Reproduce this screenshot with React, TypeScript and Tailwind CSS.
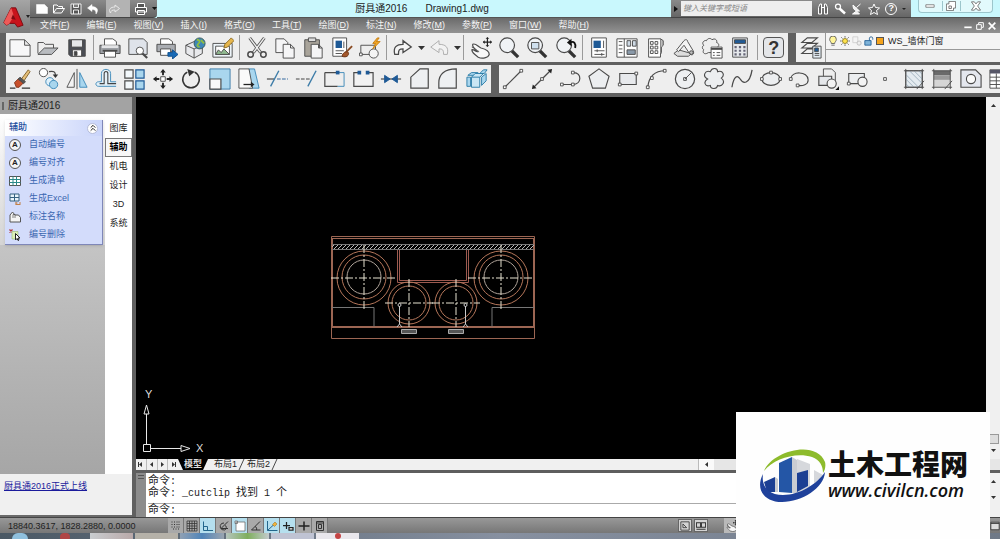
import React, { useState } from 'react';
import clsx from 'clsx';

type IconMap = Record<string, React.ReactNode>;

const BLUE = '#a9d6ee';
const NAVY = '#1f5a96';

// Toolbar glyphs, all drawn on a 24x24 grid
const icons: IconMap = {
  new: <path d="M1 3h16l6 6v12H1zM17 3v6h6" fill="#f7f7f8" />,
  open: (
    <>
      <path d="M1 18V6h6l2 2h9v4" fill="#eee" />
      <path d="M1 19l7-7h15l-7 7z" fill="#b9bcc0" />
    </>
  ),
  save: (
    <>
      <path d="M3 3h18v18H5l-2-2z" fill="#4a4d55" />
      <path d="M6 3h12v8H6z" fill="#e5e7ea" />
      <path d="M7 14h10v7H7z" fill="#fff" />
      <path d="M9 16h3v4H9z" fill="#444" />
    </>
  ),
  print: (
    <>
      <path d="M6 9V2h9l4 3v4" fill="#fff" />
      <path d="M1 9h22v9H1z" fill="#9fa2a7" />
      <path d="M3 9h18v3H3z" fill="#e3e4e6" stroke="none" />
      <path d="M6 15h12v7H6z" fill="#fff" />
      <path d="M4 15h16" strokeWidth="2" />
    </>
  ),
  preview: (
    <>
      <path d="M2 2h16l4 4v13H2z" fill="#dfe3ea" />
      <circle cx="14" cy="15" r="4" fill="#fff" />
      <path d="M17 18l5 5" strokeWidth="2.4" />
    </>
  ),
  publish: (
    <>
      <path d="M5 8V2h9l4 3v3" fill="#fff" />
      <path d="M1 8h20v8H1z" fill="#aaadb2" />
      <path d="M5 13h11v7H5z" fill="#fff" />
      <path d="M13 17h5v-3l6 5-6 5v-3h-5z" fill="#1769b5" stroke="#10508d" />
    </>
  ),
  globe: (
    <>
      <path d="M2 9l9-4 9 4v9l-9 5-9-5z" fill="#e8e9ec" />
      <path d="M2 9l9 4v10M11 13l9-4" />
      <circle cx="17" cy="7" r="6" fill="#3d86b8" stroke="#355" />
      <path d="M14 3c3 0 4 2 2 4s-2 3 1 4M19 3c0 2 2 3 3 4" stroke="#8fbf3f" strokeWidth="2" />
    </>
  ),
  picture: (
    <>
      <path d="M1 7h21v15H1z" fill="#eef5fa" />
      <path d="M4 10h15v9H4z" fill="#fff" />
      <path d="M4 19l3-5 3 3 3-4 6 6z" fill="#8fb98f" />
      <path d="M13 12l1-4 7-7 3 3-7 7z" fill="#e6b64d" stroke="#8a6a22" />
    </>
  ),
  cut: (
    <>
      <path d="M4 1l12 16M20 1L8 17" stroke="#555" strokeWidth="3.4" />
      <path d="M4 1l12 16M20 1L8 17" stroke="#eee" strokeWidth="1.6" />
      <circle cx="5" cy="19" r="3" strokeWidth="1.6" />
      <circle cx="19" cy="19" r="3" strokeWidth="1.6" />
    </>
  ),
  copy: (
    <>
      <path d="M2 2h9l4 4v11H2z" fill="#f5f5f6" />
      <path d="M10 8h8l4 4v11H10zM18 8v4h4" fill="#f5f5f6" />
    </>
  ),
  paste: (
    <>
      <path d="M3 3h16v18H3z" fill="#a9a49a" />
      <path d="M7 1h8v4H7z" fill="#ddd" />
      <path d="M10 8h8l4 4v11H10zM18 8v4h4" fill="#f5f5f6" />
    </>
  ),
  match: (
    <>
      <path d="M2 1h15v20H2z" fill="#fff" />
      <path d="M5 4h7v8H5z" fill={NAVY} stroke="none" />
      <path d="M14 5v7M5 15h9M5 18h7" />
      <path d="M16 17l7-7" stroke="#8a4a22" strokeWidth="2" />
      <path d="M12 21c1-4 4-6 7-4 1 3-2 6-7 4z" fill="#a3572b" stroke="#6a3416" />
    </>
  ),
  block: (
    <>
      <path d="M2 9h16v10H2z" fill="#eee" />
      <circle cx="16" cy="18" r="5" fill="#f4f4f4" />
      <path d="M.5 17.500h3v3h-3z" fill="#fff" />
      <path d="M20 1l-5 6h3l-3 6 8-8h-4l3-4z" fill="#f4a623" stroke="#c47d10" />
    </>
  ),
  undo: <path d="M3 19c-2-8 2-11 9-11V4l9 7-9 6v-4c-4 0-5 1-5 6z" fill="#f5f5f5" strokeWidth="1.4" />,
  redo: <path d="M21 19c2-8-2-11-9-11V4l-9 7 9 6v-4c4 0 5 1 5 6z" fill="#f2f2f2" stroke="#aaa" />,
  pan: (
    <>
      <path d="M3 8c3-2 6 3 9 4 4 1 9 3 9 7-1 4-8 5-12 3-3-2-7-6-7-8 2-1 4 2 6 2-2-2-6-5-5-8z" fill="#f8f8f8" strokeWidth="1.3" />
      <path d="M2 11c3 0 5 4 8 5" />
      <path d="M19 1v9M14.500 5.500h9" stroke="#222" strokeWidth="1.3" />
      <path d="M17 2l2-2 2 2zM17 9l2 2 2-2zM16 3.500l-2 2 2 2zM22 3.500l2 2-2 2z" fill="#222" stroke="none" />
    </>
  ),
  zoom: (
    <>
      <path d="M15 15l7 7" stroke="#333" strokeWidth="3.500" />
      <circle cx="10" cy="9" r="8" fill="#f0f3f6" strokeWidth="1.3" />
    </>
  ),
  zoomWindow: (
    <>
      <path d="M15 15l7 7" stroke="#333" strokeWidth="3.500" />
      <circle cx="10" cy="9" r="8" fill="#f0f3f6" strokeWidth="1.3" />
      <path d="M6 6h8v7H6z" fill="#cfe0ee" />
    </>
  ),
  zoomPrev: (
    <>
      <path d="M15 15l7 7" stroke="#333" strokeWidth="3.500" />
      <circle cx="10" cy="9" r="8" fill="#f0f3f6" strokeWidth="1.3" />
      <path d="M16 6c5-2 7 1 6 6" stroke="#111" strokeWidth="2" />
      <path d="M18 2v8l-5-4z" fill="#111" stroke="none" />
    </>
  ),
  props: (
    <>
      <path d="M4 1h16v21H4z" fill="#fff" />
      <path d="M6 4h8v8H6z" fill={NAVY} stroke="none" />
      <path d="M17 4v8M7 15h11M7 19h11M10 13.500v3M15 17.500v3" />
    </>
  ),
  designCenter: (
    <>
      <path d="M1 2h22v20H1z" fill="#fff" />
      <path d="M9 2v20M3 5h4M3 9h4M3 13h4M3 17h4" />
      <path d="M12 4h4v6h-4zM18 4h4v6h-4z" fill="#cfdbe6" />
      <path d="M12 14h9v5h-9z" fill="#8a9aaa" />
    </>
  ),
  palettes: (
    <>
      <path d="M5 2h13v20H5z" fill="#fff" />
      <path d="M18 2l3 2v5l-2 2v6l-1 2" fill="#bbb" />
      <path d="M7 5h3v3H7zM12 5h3v3h-3zM7 10h3v3H7zM12 10h3v3h-3zM7 15h3v3H7zM12 15h3v3h-3z" />
    </>
  ),
  sheets: (
    <>
      <path d="M1 18l5-4 14 4-3 3H5z" fill="#ddd" />
      <path d="M4 14L12 4c2-2 4-1 4 1l6 10c2 4-2 6-4 3L12 9l-6 7z" fill="#f4f4f4" />
      <circle cx="20" cy="17" r="2" fill="#bbb" />
    </>
  ),
  markup: (
    <>
      <path d="M3 9c-3-3 1-6 3-5 1-3 5-3 6-1 3-2 6 0 5 3 3 1 3 4 1 5v6H8c-4 3-7 0-5-3-2-1-2-4 0-5z" fill="#eee" />
      <path d="M11 11h12v12H11z" fill="#fff" />
      <path d="M11 13h12" strokeWidth="2" />
      <path d="M13 17h2M17 17h4M13 20h2M17 20h4" />
    </>
  ),
  calc: (
    <>
      <path d="M4 1h16v21H4z" fill="#e6e9ec" />
      <path d="M6 3h12v4H6z" fill={NAVY} />
      <path d="M6 11h12M6 15h12M6 19h12" stroke="#667" strokeWidth="2.400" strokeDasharray="2.400 2.400" />
    </>
  ),
  layers: (
    <>
      <path d="M2 18l6-5h11l-6 5zM2 12l6-5h11l-6 5zM2 6l6-5h11l-6 5z" fill="#f2f2f2" strokeWidth="1.2" />
      <path d="M14 10h9v13h-9z" fill="#e4edf4" />
      <path d="M16 12h4v4h-4z" fill={NAVY} />
      <path d="M16 18h5M16 20h5" />
    </>
  ),
  erase: (
    <>
      <path d="M1 22h6M14 22h9" stroke="#333" strokeWidth="1.500" />
      <path d="M12 14L21 2l2 2-8 12z" fill="#e6c07a" stroke="#80602a" />
      <path d="M6 16l4-4 6 4-5 5H8z" fill="#c9502c" stroke="#7c2f16" />
      <path d="M10 12l2-2 6 5-2 2z" fill="#555" />
    </>
  ),
  duplicate: (
    <>
      <circle cx="6" cy="5" r="4.500" fill="#fff" />
      <path d="M12 4c5-1 7 0 7 4" strokeWidth="1.4" />
      <path d="M16 7h6l-3 4z" fill="#333" stroke="none" />
      <circle cx="13" cy="15" r="4.500" fill="#dff0fa" stroke="#3c88b8" />
      <circle cx="17" cy="18" r="4.500" fill={BLUE} stroke="#3c88b8" />
    </>
  ),
  mirror: (
    <>
      <path d="M9 5v16H1z" fill="#f4f4f4" />
      <path d="M12 1v22" />
      <path d="M15 5v16h8z" fill={BLUE} stroke="#3c88b8" />
    </>
  ),
  offset: (
    <>
      <path d="M23 20H4c-4 0-4-5 0-5h3V6c0-6 10-6 10 0v9h6" fill="#e3f1f9" stroke="#3c88b8" />
      <path d="M23 17h-9V6c0-3-4-3-4 0v11H5" stroke="#444" strokeWidth="1.2" />
    </>
  ),
  array: (
    <>
      <path d="M2 2h9v9H2zM2 14h9v9H2z" fill="#f3f8fb" strokeWidth="1.300" />
      <path d="M14 2h9v9h-9zM14 14h9v9h-9z" fill={BLUE} stroke={NAVY} strokeWidth="1.300" />
    </>
  ),
  move: (
    <>
      <path d="M9.500 9.500h5v5h-5z" fill="#fff" />
      <path d="M12 4v4M12 16v4M4 12h4M16 12h4" stroke="#222" strokeWidth="2" />
      <path d="M9 5l3-4 3 4zM9 19l3 4 3-4zM5 9l-4 3 4 3zM19 9l4 3-4 3z" fill="#222" stroke="none" />
    </>
  ),
  rotate: (
    <>
      <path d="M8 4.500a9 9 0 1 0 8 0" stroke="#333" strokeWidth="1.600" />
      <path d="M8 1l8 3-6 5z" fill="#333" stroke="none" />
    </>
  ),
  scale: (
    <>
      <path d="M1 1h22v22H1z" fill={BLUE} stroke="#3c7ca8" />
      <path d="M1 12h12v11H1z" fill="#fafafa" strokeWidth="1.300" />
    </>
  ),
  stretch: (
    <>
      <path d="M12 1h6l5 21H12z" fill={BLUE} stroke="#3c88b8" />
      <path d="M1 1h11l4 21H1z" fill="#fafafa" />
      <path d="M6 18h9" stroke="#222" strokeWidth="1.400" />
      <path d="M14 15l4 3-4 3z" fill="#222" stroke="none" />
    </>
  ),
  trim: (
    <>
      <path d="M1 12h8" strokeWidth="1.300" />
      <path d="M12 12h12" stroke={NAVY} strokeDasharray="4 1.500" />
      <path d="M5 20L14 3" stroke="#3c7ca8" strokeWidth="1.500" />
    </>
  ),
  extend: (
    <>
      <path d="M1 12h15" stroke="#333" strokeDasharray="4 1.500" />
      <path d="M14 20L23 3" stroke="#3c7ca8" strokeWidth="1.500" />
    </>
  ),
  breakPoint: (
    <>
      <path d="M2 5h14M16 20H2V5" strokeWidth="1.300" />
      <path d="M16 5h7M23 5v15H16" stroke="#3c88b8" />
      <path d="M14 3h4v4h-4z" fill={NAVY} stroke="none" />
    </>
  ),
  break: (
    <>
      <path d="M7 5H2v15h21V5h-5" fill="#f2f2f2" strokeWidth="1.300" />
      <path d="M6 3h4v4H6zM15 3h4v4h-4z" fill={NAVY} stroke="none" />
    </>
  ),
  join: (
    <>
      <path d="M1 12h22" strokeWidth="1.300" />
      <path d="M5 8l6 4-6 4zM19 8l-6 4 6 4z" fill={NAVY} stroke={NAVY} />
    </>
  ),
  chamfer: <path d="M2 22V10l10-9h9v21z" fill="#eef0f2" strokeWidth="1.300" />,
  fillet: <path d="M2 22V16C2 7 8 1 21 1v21z" fill="#eef0f2" strokeWidth="1.300" />,
  explode: (
    <>
      <path d="M2 8l4-3h7l-3 3zM15 6l4-4h4l-3 4zM1 10h4v10H1zM17 10l5-4v8l-5 5z" fill={BLUE} stroke="#287ba6" />
      <path d="M6 10h9v11H6zM6 10l4-4h9l-4 4" fill="#c9e6f4" stroke="#287ba6" />
    </>
  ),
  line: (
    <>
      <path d="M3 21L21 3" strokeWidth="1.300" />
      <path d="M1.500 19.500h3v3h-3zM19.500 1.500h3v3h-3z" fill="#fff" />
    </>
  ),
  xline: (
    <>
      <path d="M3 21L21 3" strokeWidth="1.300" />
      <path d="M1 23l1-5 4 4zM23 1l-5 1 4 4z" fill="#222" stroke="none" />
      <path d="M10.500 10.500h3v3h-3z" fill="#fff" />
    </>
  ),
  pline: (
    <>
      <path d="M2 18h12c10 0 10-13 1-13" strokeWidth="1.300" />
      <path d="M.5 16.500h3v3h-3zM12.500 16.500h3v3h-3zM12.500 3.500h3v3h-3z" fill="#fff" />
    </>
  ),
  polygon: <path d="M12 1l11 8-4 13H5L1 9z" fill="#eceef0" strokeWidth="1.200" />,
  rect: (
    <>
      <path d="M3 6h18v12H3z" fill="#e7e9ec" strokeWidth="1.200" />
      <path d="M1.500 16.500h3v3h-3zM19.500 4.500h3v3h-3z" fill="#fff" />
    </>
  ),
  arc: (
    <>
      <path d="M3 21C4 11 9 3 22 3" strokeWidth="1.300" />
      <path d="M1.500 19.500h3v3h-3zM6 9.500h3v3H6zM20 1.500h3v3h-3z" fill="#fff" />
    </>
  ),
  circle: (
    <>
      <circle cx="12" cy="12" r="10.500" fill="#eef0f2" strokeWidth="1.300" />
      <path d="M12 12l7-7M10.500 10.500h3v3h-3z" />
    </>
  ),
  cloud: (
    <path
      d="M5 12c-6-3-3-10 3-8 2-5 8-4 8 0 6-2 8 4 4 7 5 4 1 10-4 8-1 5-8 4-8 0-6 2-8-4-3-7z"
      fill="#eceef0"
      strokeWidth="1.200"
    />
  ),
  spline: <path d="M1 21C3 9 7 7 10 12s10 7 13-10" strokeWidth="1.400" />,
  ellipse: (
    <>
      <ellipse cx="12" cy="12" rx="10" ry="7" fill="#eceef0" strokeWidth="1.200" />
      <path d="M.5 10.500h3v3h-3zM20.500 10.500h3v3h-3zM10.500 3.500h3v3h-3z" fill="#fff" />
    </>
  ),
  ellipseArc: (
    <>
      <path d="M3 12c0-9 19-9 19 1 0 5-6 7-11 6" strokeWidth="1.200" />
      <path d="M1.500 10.500h3v3h-3zM9 17.500h3v3H9z" fill="#fff" />
    </>
  ),
  insertBlock: (
    <>
      <path d="M7 1h9l4 4v11H7z" fill="#eee" />
      <path d="M2 9h14v10H2z" fill="#e5e7ea" strokeWidth="1.200" />
      <circle cx="16" cy="17" r="5" fill="#f3f3f3" strokeWidth="1.200" />
      <path d="M24 20v4h-4z" fill="#111" stroke="none" />
    </>
  ),
  makeBlock: (
    <>
      <path d="M3 6h17v11H3z" fill="#eceef0" strokeWidth="1.200" />
      <circle cx="18" cy="15" r="5" fill="#f3f3f3" strokeWidth="1.200" />
      <path d="M1.500 15.500h3v3h-3z" fill="#fff" />
    </>
  ),
  point: <path d="M10.500 10.500h3v3h-3z" fill="#fff" />,
  hatch: (
    <>
      <path d="M3 3h18v18H3z" fill="#e4ebf0" />
      <path d="M3 7l14 14M3 12l9 9M3 17l4 4M7 3l14 14M12 3l9 9M17 3l4 4" stroke="#9fb0bd" />
      <path d="M1 3h22M1 21h22M3 1v22M21 1v22M15 23l8-9" />
    </>
  ),
  gradient: (
    <>
      <path d="M3 3h18v5H3z" fill="#6a6a6a" stroke="none" />
      <path d="M3 8h18v5H3z" fill="#9a9a9a" stroke="none" />
      <path d="M3 13h18v8H3z" fill="#d6d6d6" stroke="none" />
      <path d="M1 3h22M1 21h22M3 1v22M21 1v22M15 23l8-9" />
    </>
  ),
  region: (
    <>
      <path d="M1 2h16l6 6v13H1z" fill="#e4e7ee" strokeWidth="1.200" />
      <circle cx="12" cy="12" r="5" fill="#fafafa" strokeWidth="1.200" />
    </>
  ),
  table: (
    <>
      <path d="M1 2h22v20H1z" fill="#fff" />
      <path d="M1 4h22" stroke="#556" strokeWidth="4" />
      <path d="M1 10h22M1 14h22M1 18h22M8 6v16M16 6v16" />
    </>
  ),
};

const standardTools = [
  'new', 'open', 'save', '|', 'print', 'preview', 'publish', 'globe', 'picture', '|',
  'cut', 'copy', 'paste', 'match', 'block', '|', 'undo', 'v', 'redo', 'v', '|',
  'pan', 'zoom', 'zoomWindow', 'zoomPrev', '|',
  'props', 'designCenter', 'palettes', 'sheets', 'markup', 'calc', '|', 'help',
];

const modifyTools = [
  'erase', 'duplicate', 'mirror', 'offset', 'array', 'move', 'rotate', 'scale', 'stretch',
  'trim', 'extend', 'breakPoint', 'break', 'join', 'chamfer', 'fillet', 'explode',
];

const drawTools = [
  'line', 'xline', 'pline', 'polygon', 'rect', 'arc', 'circle', 'cloud', 'spline', 'ellipse',
  'ellipseArc', 'insertBlock', 'makeBlock', 'point', 'hatch', 'gradient', 'region', 'table',
];

const menus = [
  '文件(F)', '编辑(E)', '视图(V)', '插入(I)', '格式(O)', '工具(T)',
  '绘图(D)', '标注(N)', '修改(M)', '参数(P)', '窗口(W)', '帮助(H)',
];

const paletteTabs = ['图库', '辅助', '机电', '设计', '3D', '系统'];

const Svg: React.FC<{ size?: string; children: React.ReactNode; box?: string }> = ({
  size = 'size-6',
  box = '0 0 24 24',
  children,
}) => (
  <svg viewBox={box} className={clsx('shrink-0', size)} fill="none" stroke="#4a4a4a" strokeWidth="1" aria-hidden="true">
    {children}
  </svg>
);

const Tool: React.FC<{ name: string }> = ({ name }) => {
  if (name === '|') {
    return (
      <span className="flex min-w-0 flex-[10] justify-center py-0.5">
        <span className="w-px bg-[#9a9a9a]" />
      </span>
    );
  }
  if (name === 'v') {
    return (
      <button aria-label="列表" className="flex min-w-0 flex-[16] items-center justify-center">
        <Svg size="h-1 w-[7px]" box="0 0 7 4">
          <path d="M0 0h7L3.500 4z" fill="#333" stroke="none" />
        </Svg>
      </button>
    );
  }
  if (name === 'help') {
    return (
      <button aria-label={name} className="flex min-w-0 flex-[57] items-center justify-center">
        <span className="flex size-[21px] items-center justify-center rounded-sm border border-[#555] bg-[#e4e6e9] text-[18px] leading-none font-bold text-[#333]">
          ?
        </span>
      </button>
    );
  }
  return (
    <button aria-label={name} className="flex min-w-0 flex-[57] items-center justify-center">
      <Svg size="size-[22px]">{icons[name]}</Svg>
    </button>
  );
};

const TitleBar: React.FC = () => (
  <div className="flex h-[18px] bg-[#c9f8fd]">
    <div className="flex w-[127px] items-center gap-[5px] rounded-br-sm border-b border-[#444] bg-linear-to-b from-[#8a8a8a] to-[#666] pl-1.5">
      <button aria-label="新建"><Svg size="size-3"><path d="M1 3h16l6 6v12H1z" fill="#fff" stroke="#fff" /></Svg></button>
      <button aria-label="打开"><Svg size="size-3"><path d="M1 20V4h7l3 3h8v3M1 20l6-9h16l-6 9z" fill="#777" stroke="#fff" strokeWidth="2" /></Svg></button>
      <button aria-label="保存"><Svg size="size-3"><path d="M2 2h20v20H2zM7 2v7h10V2M7 22v-8h10v8" fill="#555" stroke="#eee" strokeWidth="2" /></Svg></button>
      <button aria-label="放弃"><Svg size="size-3"><path d="M10 3L1 10l9 7v-4c6 0 8 2 8 9 6-8 3-14-8-15z" fill="#fff" stroke="#fff" /></Svg></button>
      <button aria-label="重做" className="ml-0.5 flex h-full w-6 items-center bg-[#b3b3b3] pl-0.5"><Svg size="size-3"><path d="M14 4l9 7-9 7v-4c-6 0-8 1-9 6-5-7 0-12 9-12z" stroke="#e8e8e8" strokeWidth="2" /></Svg></button>
      <button aria-label="打印"><Svg size="size-3"><path d="M5 9V1h14v8M1 9h22v9H1zM5 15h14v8H5z" fill="#555" stroke="#fff" strokeWidth="2" /></Svg></button>
      <Svg size="h-[3px] w-[5px]" box="0 0 5 3"><path d="M0 0h5L2.500 3z" fill="#111" stroke="none" /></Svg>
    </div>
    <h1 className="flex min-w-0 flex-1 items-center justify-center gap-[18px] border-b border-[#555] pl-4 text-[10px] whitespace-nowrap text-[#222]">
      <span>厨具通2016</span>
      <span>Drawing1.dwg</span>
    </h1>
    <form className="flex w-[240px] items-center border-b border-[#444] bg-linear-to-b from-[#8a8a8a] to-[#666]">
      <button type="button" aria-label="展开" className="flex w-2.5 justify-center">
        <Svg size="h-1.5 w-1" box="0 0 4 6"><path d="M0 0l4 3-4 3z" fill="#111" stroke="none" /></Svg>
      </button>
      <input
        aria-label="搜索"
        placeholder="键入关键字或短语"
        className="h-[15px] w-[131px] bg-[#eee] px-0.5 text-[8px] italic outline-none placeholder:text-[#888]"
      />
      <div className="flex flex-1 items-center justify-around px-0.5">
        <button type="button" aria-label="查找"><Svg size="size-3"><path d="M3 22V9l3-7h3v20zM21 22V9l-3-7h-3v20zM9 9h6" fill="#666" stroke="#fff" strokeWidth="2" /></Svg></button>
        <button type="button" aria-label="订阅"><Svg size="size-3"><circle cx="8" cy="7" r="5" fill="#777" stroke="#fff" strokeWidth="2.500" /><path d="M11 11l11 10" stroke="#fff" strokeWidth="5" /></Svg></button>
        <button type="button" aria-label="通讯"><Svg size="size-3"><path d="M4 4c0 9 5 13 13 12zM11 9l8-7M3 22h14l-6-6z" fill="#eee" stroke="#fff" strokeWidth="2" /></Svg></button>
        <button type="button" aria-label="收藏"><Svg size="size-3"><path d="M12 2l3 7 8 1-6 5 2 8-7-4-7 4 2-8-6-5 8-1z" fill="#666" stroke="#fff" strokeWidth="2" /></Svg></button>
        <button type="button" aria-label="帮助" className="flex size-3 items-center justify-center rounded-full border border-white text-[9px] leading-none font-bold text-white">?</button>
        <Svg size="h-0.5 w-1" box="0 0 4 2"><path d="M0 0h4L2 2z" fill="#222" stroke="none" /></Svg>
      </div>
    </form>
    <div className="flex w-[89px] justify-center border-b border-[#555]">
      <div className="flex h-[13px] w-[75px] items-center rounded-b-sm border border-t-0 border-[#9cc6cc] bg-[#e2fafc]">
        <button aria-label="最小化" className="flex flex-[26] justify-center"><Svg size="size-2.5"><path d="M2 9h20v6H2z" fill="#fff" stroke="#777" strokeWidth="2" /></Svg></button>
        <button aria-label="还原" className="flex flex-[20] justify-center border-x border-[#9cc6cc]"><Svg size="size-2.5"><path d="M7 1h16v16h-5v6H1V7h6zM7 12h6v6H7z" fill="#fff" stroke="#666" strokeWidth="2" /></Svg></button>
        <button aria-label="关闭" className="flex flex-[36] justify-center"><Svg size="size-2.5"><path d="M1 2h7l4 5 4-5h7l-7 10 7 10h-7l-4-5-4 5H1l7-10z" fill="#fff" stroke="#666" strokeWidth="2" /></Svg></button>
      </div>
    </div>
  </div>
);

const MenuBar: React.FC = () => (
  <nav className="flex h-[15px] items-center bg-linear-to-b from-[#6b6b6b] to-[#939393] pr-1 pl-2.5 text-[#f4f4f4]">
    <ul className="flex flex-1 gap-[17px] text-[9px] leading-[15px] whitespace-nowrap">
      {menus.map((m) => (
        <li key={m}>
          <button>
            {m.slice(0, 3)}
            <span className="underline">{m[3]}</span>)
          </button>
        </li>
      ))}
    </ul>
    <div className="flex gap-1">
      <button aria-label="最小化"><Svg size="size-2"><path d="M1 16h22" stroke="#fff" strokeWidth="5" /></Svg></button>
      <button aria-label="还原"><Svg size="size-2"><path d="M8 6V2h14v14h-4M2 8h14v14H2z" stroke="#fff" strokeWidth="3" /></Svg></button>
      <button aria-label="关闭"><Svg size="size-2"><path d="M2 2l20 20M22 2L2 22" stroke="#fff" strokeWidth="5" /></Svg></button>
    </div>
  </nav>
);

const LayerBar: React.FC = () => (
  <div className="flex min-w-0 flex-[204] bg-[#f0f0f0]">
    <button aria-label="图层" className="flex w-[29px] items-center justify-center"><Svg size="size-[22px]">{icons.layers}</Svg></button>
    <div className="flex-1 border-l border-[#999]">
      <div className="flex h-[17px] items-center gap-0.5 border-b border-[#999] bg-[#f4f4f4] pl-0.5">
        <Svg size="size-2.5"><path d="M8 22h8M8 18c0-4-4-5-4-10a8 8 0 0 1 16 0c0 5-4 6-4 10z" fill="#fff59a" stroke="#555" strokeWidth="2" /></Svg>
        <Svg size="size-2.5"><circle cx="12" cy="12" r="6" fill="#ffe34d" stroke="#86731d" strokeWidth="2" /><path d="M12 0v4M12 20v4M0 12h4M20 12h4M3 3l3 3M18 18l3 3M21 3l-3 3M6 18l-3 3" stroke="#555" strokeWidth="2" /></Svg>
        <Svg size="size-2.5"><path d="M2 2h12v14H2z" stroke="#ccc" strokeWidth="2" /><circle cx="17" cy="17" r="5" fill="#eee" stroke="#bbb" strokeWidth="2" /></Svg>
        <Svg size="size-2.5"><path d="M2 11h15v11H2z" fill="#7fb3d9" stroke="#1d5d94" strokeWidth="2" /><path d="M13 11V5c0-4 8-4 8 0v4" stroke="#1d5d94" strokeWidth="2" /></Svg>
        <span className="size-2 shrink-0 border border-[#555] bg-[#f5a31b]" />
        <select aria-label="图层列表" className="w-full appearance-none pl-0.5 text-[9px] leading-[14px] text-[#222] outline-none">
          <option>WS_墙体门窗</option>
        </select>
      </div>
    </div>
  </div>
);

const paletteItems: { label: string; icon: React.ReactNode }[] = [
  { label: '自动编号', icon: <span className="flex size-3 items-center justify-center rounded-full border border-[#555] bg-[#f4f4f4] text-[8px] leading-none font-bold text-[#222]">A</span> },
  { label: '编号对齐', icon: <span className="flex size-3 items-center justify-center rounded-full border border-[#555] bg-[#f4f4f4] text-[8px] leading-none font-bold text-[#222]">A</span> },
  {
    label: '生成清单',
    icon: <Svg size="size-3"><path d="M1 3h22v18H1z" fill="#fff" stroke="#555" strokeWidth="2" /><path d="M8 3v18M15 3v18M1 9h22M1 15h22" stroke="#2a8a8a" strokeWidth="2" /></Svg>,
  },
  {
    label: '生成Excel',
    icon: <Svg size="size-3"><path d="M2 2h18v14H2zM11 2v14M2 9h18" fill="#e8f4fa" stroke="#35617f" strokeWidth="2" /><path d="M14 18v5M13 20h4M20 20h4M13 23h10" stroke="#c08048" strokeWidth="2" /></Svg>,
  },
  {
    label: '标注名称',
    icon: <Svg size="size-3"><path d="M2 8l5-6 5 6h7l4 5v9H2z" fill="#f5f5f5" stroke="#555" strokeWidth="2" /><path d="M8 14V7h4v7" stroke="#555" strokeWidth="1.500" /></Svg>,
  },
  {
    label: '编号删除',
    icon: <Svg size="size-3"><path d="M1 1l6 6M7 1L1 7" stroke="#b03030" strokeWidth="2.500" /><path d="M6 5h12v15H6z" fill="#dcefb8" stroke="#8ab05a" /><path d="M13 9v13l3-3 2 4 2-1-2-4h4z" fill="#fff" stroke="#222" strokeWidth="2" /></Svg>,
  },
];

const Palette: React.FC = () => {
  const [active, setActive] = useState('辅助');
  return (
    <aside className="flex w-[132px] shrink-0 flex-col">
      <div className="flex h-[17px] items-center gap-1 bg-[#a3a3a3] pl-0.5 text-[10px] text-[#222]">
        <span className="h-2 w-0.5 bg-[#666]" />
        厨具通2016
      </div>
      <div className="flex flex-1 bg-white">
        <div className="flex-1 bg-linear-to-b from-[#d6d6d6] to-[#a6a6a6]">
          <div className="bg-linear-to-b from-white to-[#d4d4d4] pt-1.5 pr-0.5 pl-[5px]">
            <section className="border-r border-b border-[#7f87b8] bg-[#d3dcfb] shadow-sm">
              <h2 className="flex h-4 items-center justify-between bg-linear-to-r from-white to-[#c9d4fa] px-1 text-[9px] font-medium text-[#1f4f9e]">
                辅助
                <button aria-label="折叠" className="flex size-[11px] items-center justify-center rounded-full border border-[#b5bcd8] bg-white">
                  <Svg size="size-2"><path d="M5 11l7-7 7 7M5 20l7-7 7 7" stroke="#222" strokeWidth="3" /></Svg>
                </button>
              </h2>
              <ul>
                {paletteItems.map((item) => (
                  <li key={item.label}>
                    <button className="flex h-[18px] w-full items-center gap-2 pl-1 text-[9px] text-[#3a66b0]">
                      {item.icon}
                      {item.label}
                    </button>
                  </li>
                ))}
              </ul>
            </section>
          </div>
        </div>
        <div className="flex w-[27px] flex-col pt-[5px] text-[9px] text-[#222]" role="tablist">
          {paletteTabs.map((t) => (
            <button
              key={t}
              role="tab"
              aria-selected={t === active}
              onClick={() => setActive(t)}
              className={clsx('h-[19px]', t === active && 'border border-[#777] bg-[#f7f7f7] font-bold text-black')}
            >
              {t}
            </button>
          ))}
        </div>
      </div>
      <div className="h-[41px] bg-[#f0f0f0] pt-1 pl-1 text-[9px] leading-4">
        <a href="#news" className="text-[#1b1b9c] underline">厨具通2016正式上线</a>
      </div>
      <div className="h-0.5 bg-[#6a6a6a]" />
    </aside>
  );
};

const Burner: React.FC<{ cx: number; cy: number; rings: number[]; arm: number }> = ({ cx, cy, rings, arm }) => (
  <g>
    {rings.map((r, i) => (
      <circle key={r} cx={cx} cy={i > 0 && rings.length > 2 ? cy - 1 : cy} r={r} stroke={i === 2 ? '#b0a49a' : '#b5765a'} />
    ))}
    <path
      d={`M${cx - arm} ${cy}h${arm * 2}M${cx} ${cy - arm}v${arm * 2}`}
      stroke="#e6e2d0"
      strokeDasharray="8 2 2 2"
    />
  </g>
);

// Plan view of the four-burner range
const RangePlan: React.FC = () => (
  <svg viewBox="0 0 204 104" className="absolute top-[139px] left-[195px] h-[104px] w-[204px]" fill="none" stroke="#9c6653" aria-hidden="true">
    <defs>
      <pattern id="slash" width="4" height="4" patternUnits="userSpaceOnUse">
        <path d="M0 4L4 0" stroke="#b5b5b5" strokeWidth="1" />
      </pattern>
    </defs>
    <path d="M.5.500h203v102H.5zM.5 2.500h203M.5 90.500h203M.5 91.500h203M1.500 3v88M202.500 3v88" />
    <path d="M1 8h202v5H1z" fill="url(#slash)" stroke="none" />
    <path d="M1 8.500h202M1 13.500h202" stroke="#777" />
    <path d="M66.500 14v32.500h71V14M68.500 14v30.500h67V14" stroke="#9c5a50" />
    <path d="M1 71.500h42v19M203 71.500h-42v19" stroke="#777" />
    <Burner cx={33} cy={42} rings={[27, 22, 17]} arm={33} />
    <Burner cx={170} cy={42} rings={[27, 22, 17]} arm={33} />
    <Burner cx={78} cy={67} rings={[21, 17]} arm={24} />
    <Burner cx={125} cy={67} rings={[21, 17]} arm={24} />
    <path d="M68.500 70v18M134.500 70v18M66 91l2.500-3 2.500 3M132 91l2.500-3 2.500 3" stroke="#c9c9c9" />
    <circle cx="68.500" cy="69" r="1.500" stroke="#c9c9c9" />
    <circle cx="134.500" cy="69" r="1.500" stroke="#c9c9c9" />
    <path d="M70.500 93.500h15v4h-15zM117.500 93.500h15v4h-15z" fill="#555" stroke="#aaa" />
  </svg>
);

const UcsIcon: React.FC = () => (
  <svg viewBox="0 0 70 70" className="absolute bottom-0 left-1 size-[70px]" fill="none" stroke="#e8e8e8" aria-hidden="true">
    <path d="M3.500 55.500h7v7h-7zM6.500 55V25M11 59.500h30M4 25l2.500-9 2.500 9zM41 56.500l9 3-9 3z" />
    <text x="5" y="9" fill="#ddd" stroke="none" fontSize="11">Y</text>
    <text x="56" y="63" fill="#ddd" stroke="none" fontSize="11">X</text>
  </svg>
);

const Arrow: React.FC<{ dir: 'up' | 'down' | 'left' | 'right'; bar?: boolean }> = ({ dir, bar }) => (
  <Svg size="size-[5px]" box="0 0 10 10">
    {dir === 'up' && <path d="M0 8l5-6 5 6z" fill="#333" stroke="none" />}
    {dir === 'down' && <path d="M0 2l5 6 5-6z" fill="#333" stroke="none" />}
    {dir === 'left' && <path d="M8 0L2 5l6 5z" fill="#333" stroke="none" />}
    {dir === 'right' && <path d="M2 0l6 5-6 5z" fill="#333" stroke="none" />}
    {bar && <path d={dir === 'left' ? 'M1 0v10' : 'M9 0v10'} stroke="#333" strokeWidth="2" />}
  </Svg>
);

const LayoutTabs: React.FC = () => (
  <div className="flex h-[11px] items-stretch bg-[#f0f0f0] text-[9px] leading-[11px] text-[#222]">
    <div className="flex w-[42px]">
      <button aria-label="首个" className="flex flex-1 items-center justify-center border-r border-[#bbb]"><Arrow dir="left" bar /></button>
      <button aria-label="上一个" className="flex flex-1 items-center justify-center border-r border-[#bbb]"><Arrow dir="left" /></button>
      <button aria-label="下一个" className="flex flex-1 items-center justify-center border-r border-[#bbb]"><Arrow dir="right" /></button>
      <button aria-label="末个" className="flex flex-1 items-center justify-center"><Arrow dir="right" bar /></button>
    </div>
    <button className="bg-black px-1.5 font-bold text-[#ddd] [clip-path:polygon(0_0,100%_0,calc(100%-5px)_100%,5px_100%)]">模型</button>
    <button className="pl-1.5">布局1</button>
    <Svg size="h-[11px] w-2" box="0 0 8 11"><path d="M2 11L7 0" /></Svg>
    <button className="pl-0.5">布局2</button>
    <Svg size="h-[11px] w-2" box="0 0 8 11"><path d="M2 11L7 0" /></Svg>
    <div className="ml-auto flex w-[302px] bg-[#e6e6e6]">
      <button aria-label="向左滚动" className="flex w-4 items-center justify-center border-l border-[#bbb] bg-[#fafafa]"><Arrow dir="left" /></button>
    </div>
  </div>
);

const Zh: React.FC<{ children: string }> = ({ children }) => <span className="text-[11px]">{children}</span>;

const CommandLine: React.FC = () => (
  <div className="flex h-[47px] border-t-[3px] border-[#5e5e5e] bg-[#8c8c8c]">
    <div className="flex w-2.5 shrink-0 flex-col gap-0.5 px-0.5 pt-0.5">
      <span className="h-px bg-[#555]" />
      <span className="h-px bg-[#555]" />
    </div>
    <div className="flex min-w-0 flex-1 flex-col bg-white pt-0.5 pl-0.5 font-['Liberation_Mono','Noto_Sans_CJK_SC',monospace] text-[10px] text-[#222]">
      <p className="h-3 leading-3"><Zh>命令</Zh>:</p>
      <p className="h-[18px] leading-3"><Zh>命令</Zh>: _cutclip <Zh>找到</Zh> 1 <Zh>个</Zh></p>
      <div className="flex flex-1 items-center border-t border-[#aaa] leading-3">
        <label htmlFor="command" className="shrink-0"><Zh>命令</Zh>:</label>
        <input id="command" className="h-2.5 min-w-0 flex-1 outline-none" />
      </div>
    </div>
    <div className="flex w-3.5 flex-col items-center justify-around border-l border-[#ccc] bg-[#f0f0f0] pb-3">
      <Arrow dir="up" />
      <Arrow dir="down" />
    </div>
  </div>
);

const statusToggles: { label: string; on?: boolean; icon: React.ReactNode }[] = [
  { label: '捕捉', icon: <path d="M3 4h12M3 9h12M3 14h12M18 3v15h-15" strokeDasharray="2 3" stroke="#333" strokeWidth="2" /> },
  { label: '栅格', icon: <path d="M2 2h20v20H2zM7 2v20M12 2v20M17 2v20M2 7h20M2 12h20M2 17h20" stroke="#333" strokeWidth="1.500" /> },
  { label: '正交', on: true, icon: <path d="M3 3v18h19M3 13h8v8" stroke="#23668c" strokeWidth="2" /> },
  { label: '极轴', icon: <path d="M20 3L6 17h14M12 6a7 7 0 1 0 5 11M14 11c3 1 3 4 2 6" stroke="#333" strokeWidth="2" /> },
  { label: '对象捕捉', on: true, icon: <path d="M4 4h18v18H4zM2 2h5v5H2z" fill="#fff" stroke="#666" strokeWidth="1.500" /> },
  { label: '对象追踪', icon: <path d="M20 3L3 20h18M10 13c3 1 4 4 3 7" stroke="#333" strokeWidth="2" /> },
  {
    label: '动态UCS',
    on: true,
    icon: (
      <>
        <path d="M3 2v19h20M3 21L17 8" stroke="#23668c" strokeWidth="2" />
        <path d="M13 9l5-5 4 4-5 5z" fill="#f0b23c" stroke="#9c6f14" />
      </>
    ),
  },
  { label: '动态输入', on: true, icon: <path d="M2 11h14M9 4v14M14 15h8v5h-8z" fill="#fff" stroke="#222" strokeWidth="2.500" /> },
  { label: '线宽', icon: <path d="M1 12h22M12 3v18" stroke="#222" strokeWidth="3" /> },
  { label: '快捷特性', icon: <path d="M5 3h14v18H5zM9 9h6v8H9zM5 6h14" stroke="#333" strokeWidth="2" /> },
];

const StatusBar: React.FC = () => (
  <div className="flex h-4 items-stretch border-t border-[#444] bg-linear-to-b from-[#989898] to-[#777]">
    <output className="w-40 pl-2 text-[9px] leading-[17px] whitespace-nowrap text-[#222]">18840.3617, 1828.2880, 0.0000</output>
    <div className="ml-2 flex">
      {statusToggles.map((s) => (
        <button
          key={s.label}
          aria-label={s.label}
          aria-pressed={!!s.on}
          className={clsx('flex w-4 items-center justify-center border-r border-[#777]', s.on ? 'bg-[#b5dfee]' : 'bg-[#a9a9a9]')}
        >
          <Svg size="size-3">{s.icon}</Svg>
        </button>
      ))}
    </div>
    <div className="ml-auto flex items-center gap-0.5">
      <button aria-label="模型" className="flex h-[13px] w-3.5 items-center justify-center border border-[#666] bg-[#d4d4d4]"><Svg size="size-2.5"><path d="M2 2h20v20H2zM7 7v9h9z" stroke="#333" strokeWidth="2" /></Svg></button>
      <button aria-label="快速查看布局" className="flex h-[13px] w-3.5 items-center justify-center border border-[#666] bg-[#d4d4d4]"><Svg size="size-2.5"><path d="M1 4h10v11H1zM13 4h10v11H13zM1 20h22" stroke="#333" strokeWidth="2.500" /></Svg></button>
    </div>
    <button aria-label="平移" className="mr-[250px] ml-4 flex w-4 items-center justify-center bg-[#b9b9b9]"><Svg size="size-3">{icons.pan}</Svg></button>
    <button aria-label="全屏显示" className="flex w-2.5 items-center"><Svg size="size-2.5"><path d="M2 3h20v18H2zM2 6h20" fill="#ddd" stroke="#333" strokeWidth="2" /></Svg></button>
  </div>
);

const TaskBar: React.FC = () => (
  <div className="flex h-1.5 overflow-hidden bg-linear-to-r from-[#4a5864] via-[#8790a0] to-[#6f7987]">
    <span className="ml-3 h-3 w-4 rounded-full bg-[#8fc0dd]" />
    <span className="mr-5 ml-8 h-2 w-2.5 rounded-full bg-[#b04545]" />
    <div className="flex gap-0.5">
      <span className="w-[43px] bg-linear-to-r from-[#c9cdd0] to-[#b9a9a9]" />
      <span className="w-[43px] bg-[#b5b1a8]" />
      <span className="w-[44px] bg-linear-to-r from-[#8fa0b4] via-[#4f84b8] to-[#9aa4b0]" />
      <span className="w-[43px] bg-linear-to-r from-[#b6c4bd] via-[#7fae5c] to-[#c4cacc]" />
      <span className="w-[43px] bg-[#bfc3d3]" />
      <span className="flex w-[43px] justify-center bg-[#e9e7ec]"><span className="size-1.5 rounded-full bg-[#c44444]" /></span>
    </div>
  </div>
);

const Watermark: React.FC = () => (
  <div className="absolute right-2.5 bottom-0 flex h-[127px] w-[254px] items-center bg-[#fefefe] pl-[22px]">
    <svg viewBox="0 0 70 56" className="h-14 w-[70px] shrink-0" aria-hidden="true">
      <path d="M39 11l13 5v27l-13 4zM56 22l9 5-9 12z" fill="#d6d8dc" />
      <path d="M6 34l11-5v15H9z" fill="#1c3f93" />
      <path d="M21 15l13-6v36l-13-1z" fill="#2456a6" />
      <path d="M39 25l11-3v16l-11 6z" fill="#1c3f93" />
      <path d="M34 9l5 3v34l-5-1zM17 29l3 2v13h-3z" fill="#c9ccd2" />
      <path d="M6 23C14 3 58-9 67 14c1 4 0 8-2 11 0-7-3-13-11-16C37 4 16 11 6 23z" fill="#8dbb2c" />
      <path d="M5 26C-3 41 6 54 24 54c20 0 42-14 43-30-8 12-25 23-42 23C12 47 3 40 5 26z" fill="#1f419b" />
    </svg>
    <div className="flex flex-col whitespace-nowrap text-[#111]">
      <span className="text-[28px] leading-7 font-black">土木工程网</span>
      <span className="font-['Open_Sans',sans-serif] text-[18px] leading-5 font-semibold italic">www.civilcn.com</span>
    </div>
  </div>
);

const App: React.FC = () => (
  <div className="relative flex min-h-screen w-full flex-col overflow-hidden bg-[#606060] font-['Liberation_Sans','Noto_Sans_CJK_SC',sans-serif]">
    <header className="flex">
      <button aria-label="应用程序菜单" className="flex w-[30px] shrink-0 items-center gap-0.5 bg-linear-to-b from-[#a5a5a5] to-[#7b7b7b] pl-0.5">
        <Svg size="size-[22px]">
          <path d="M2 18L10 2h5l8 19-6 2-3-4H8l-3 2z" fill="#c8141c" stroke="#7a0a10" />
          <path d="M2 18L10 2l3 9-5 8-3 2z" fill="#ee5a58" stroke="none" />
          <path d="M10 14l2-5 3 6z" fill="#7e0c12" stroke="none" />
        </Svg>
        <Svg size="h-[3px] w-1" box="0 0 4 3"><path d="M0 0h4L2 3z" fill="#222" stroke="none" /></Svg>
      </button>
      <div className="min-w-0 flex-1">
        <TitleBar />
        <MenuBar />
      </div>
    </header>

    <div className="flex h-[29px] gap-2 pl-1.5">
      <div className="flex min-w-0 flex-[782] bg-[#eeeeee]">
        {standardTools.map((t, i) => <Tool key={i} name={t} />)}
      </div>
      <LayerBar />
    </div>
    <div className="mt-[3px] mb-1 flex h-7 gap-2 pl-1.5">
      <div className="flex min-w-0 flex-[485] bg-[#eeeeee]">
        {modifyTools.map((t) => <Tool key={t} name={t} />)}
      </div>
      <div className="flex min-w-0 flex-[501] overflow-hidden bg-[#eeeeee]">
        <div className="-mr-3.5 flex flex-1">
          {drawTools.map((t) => <Tool key={t} name={t} />)}
        </div>
      </div>
    </div>

    <div className="flex flex-1 gap-1">
      <Palette />
      <main className="flex min-w-0 flex-1 flex-col">
        <div className="flex min-h-[362px] flex-1">
          <div className="relative flex-1 overflow-hidden bg-black">
            <RangePlan />
            <UcsIcon />
          </div>
          <div className="flex w-3.5 flex-col items-center justify-between bg-[#f0f0f0] py-1.5">
            <Arrow dir="up" />
            <div className="flex flex-col items-center gap-1">
              <span className="h-2.5 w-3 border border-[#999] bg-[#ddd]" />
              <Arrow dir="down" />
            </div>
          </div>
        </div>
        <LayoutTabs />
        <CommandLine />
      </main>
    </div>
    <StatusBar />
    <TaskBar />
    <Watermark />
  </div>
);

export default App;
